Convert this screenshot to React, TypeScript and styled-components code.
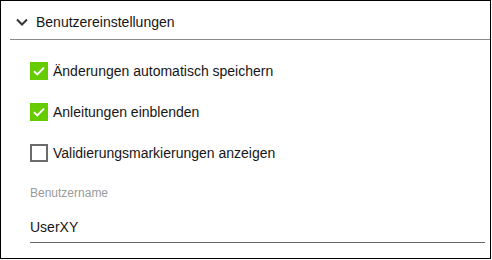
import React from "react";
import styled, { createGlobalStyle } from "styled-components";

const GlobalStyle = createGlobalStyle`
  html, body { margin: 0; padding: 0; background: #ffffff; }
  body { font-family: "Liberation Sans", Arial, sans-serif; }
  * { box-sizing: border-box; }
`;

const Panel = styled.div`
  width: 491px;
  height: 259px;
  border: 1px solid #000;
  background: #fff;
  display: flex;
  flex-direction: column;
  color: #161616;
`;

const Header = styled.div`
  margin-left: 9px;
  height: 39px;
  padding: 3px 0 0 6px;
  border-bottom: 1px solid #8a8a8a;
  display: flex;
  align-items: center;
  gap: 8px;
  font-size: 14px;
  line-height: 16px;
`;

const Body = styled.div`
  padding: 10px 5px 0 29px;
  display: flex;
  flex-direction: column;
`;

const Row = styled.label`
  height: 41px;
  display: flex;
  align-items: center;
  gap: 5px;
  font-size: 14px;
  line-height: 16px;
`;

const Box = styled.span<{ $checked: boolean }>`
  width: 18px;
  height: 18px;
  flex: none;
  display: flex;
  align-items: center;
  justify-content: center;
  background: ${(p) => (p.$checked ? "#66cc00" : "#fff")};
  border: ${(p) => (p.$checked ? "none" : "2px solid #6b6b6b")};
`;

const Field = styled.div`
  margin-top: 13px;
  display: flex;
  flex-direction: column;
`;

const FieldLabel = styled.div`
  font-size: 12px;
  line-height: 14px;
  color: #9a9a9a;
`;

const FieldValue = styled.div`
  margin-top: 19px;
  font-size: 14px;
  line-height: 16px;
  padding-bottom: 7px;
  border-bottom: 1px solid #666;
`;

const Chevron = () => (
  <svg width="12" height="8" viewBox="0 0 12 8" style={{ flex: "none" }}>
    <path d="M1 1.5 L6 6.5 L11 1.5" fill="none" stroke="#333" strokeWidth="2" />
  </svg>
);

const Check = () => (
  <svg width="18" height="18" viewBox="0 0 18 18">
    <path d="M4 9.2 L7.3 12.4 L14 5.6" fill="none" stroke="#fff" strokeWidth="2" />
  </svg>
);

const Checkbox = ({ checked, label }: { checked: boolean; label: string }) => (
  <Row>
    <Box $checked={checked}>{checked && <Check />}</Box>
    <span>{label}</span>
  </Row>
);

export default function App() {
  return (
    <>
      <GlobalStyle />
      <Panel>
        <Header>
          <Chevron />
          <span>Benutzereinstellungen</span>
        </Header>
        <Body>
          <Checkbox checked label="Änderungen automatisch speichern" />
          <Checkbox checked label="Anleitungen einblenden" />
          <Checkbox checked={false} label="Validierungsmarkierungen anzeigen" />
          <Field>
            <FieldLabel>Benutzername</FieldLabel>
            <FieldValue>UserXY</FieldValue>
          </Field>
        </Body>
      </Panel>
    </>
  );
}
